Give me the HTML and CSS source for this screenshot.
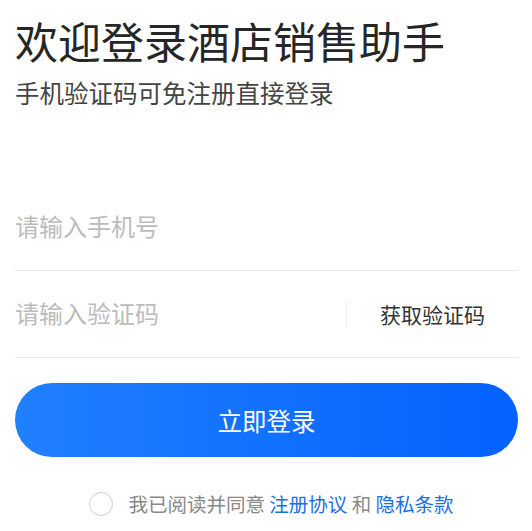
FILE: index.html
```html
<!DOCTYPE html>
<html lang="zh-CN">
<head>
    <meta charset="UTF-8">
    <meta name="viewport" content="width=device-width, initial-scale=1.0">
    <title>欢迎登录酒店销售助手</title>
    <link rel="stylesheet" href="styles.css">
</head>
<body>
    <div class="login-page">
        <h1 class="login-title">欢迎登录酒店销售助手</h1>
        <p class="login-subtitle">手机验证码可免注册直接登录</p>

        <form class="login-form" onsubmit="return false">
            <div class="form-row">
                <input type="tel" class="form-input" placeholder="请输入手机号">
            </div>
            <div class="form-row">
                <input type="text" class="form-input" placeholder="请输入验证码">
                <span class="row-divider"></span>
                <button type="button" class="code-btn">获取验证码</button>
            </div>
            <button type="submit" class="submit-btn">立即登录</button>
        </form>

        <div class="agreement">
            <span class="check-circle"></span>
            <span>我已阅读并同意 <a href="#" class="link">注册协议</a> 和 <a href="#" class="link">隐私条款</a></span>
        </div>
    </div>
</body>
</html>
```

FILE: styles.css
```css
body{margin:0;padding:0;background-color:#fff;font-family:"Noto Sans CJK SC","Noto Sans",sans-serif;color:#222;}
.login-page{padding:0 14px 0 15px;}
.login-title{margin:0;padding-top:12px;font-size:43px;font-weight:normal;line-height:56px;color:#262626;}
.login-subtitle{margin:8px 0 0;font-size:24.5px;line-height:34px;color:#444;}
.login-form{margin-top:74px;}
.form-row{display:flex;align-items:center;height:86px;border-bottom:1px solid #e8e8e8;}
.form-input{flex:1;min-width:0;height:40px;padding:0 0 3px;border:none;outline:none;background:transparent;font-family:inherit;font-size:24px;color:#333;}
.form-input::placeholder{color:#bbb;}
.row-divider{width:1px;height:28px;background-color:#eee;}
.code-btn{width:171px;padding:0;border:none;background:transparent;font-family:inherit;font-size:21px;color:#333;text-align:center;}
.submit-btn{display:block;width:100%;height:74px;margin-top:25px;border:none;border-radius:37px;background:linear-gradient(to right,#2080ff,#0362ff);font-family:inherit;font-size:24.5px;color:#fff;cursor:pointer;}
.agreement{display:flex;align-items:center;justify-content:center;gap:15px;margin-top:35px;padding-left:10px;font-size:19.5px;line-height:24px;color:#888;}
.check-circle{width:22px;height:22px;border:1px solid #ccc;border-radius:50%;}
.link{color:#1a6fe8;text-decoration:none;}
```
